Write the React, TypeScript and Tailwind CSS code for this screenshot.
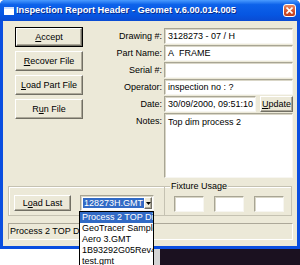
import React from "react";

const raised =
  "border border-white border-b-[#716f64] border-r-[#716f64] shadow-[inset_-1px_-1px_0_#aca899] bg-[#ece9d8]";
const sunken =
  "border border-[#a8a594] border-b-[#f7f6f1] border-r-[#f7f6f1] shadow-[inset_1px_1px_0_#d9d6c7] bg-white";

const Btn = ({ children, className = "" }: { children: React.ReactNode; className?: string }) => (
  <div className={`flex items-center justify-center ${raised} ${className}`}>{children}</div>
);

const U = ({ children }: { children: React.ReactNode }) => (
  <span className="underline underline-offset-[1px]">{children}</span>
);

const Row = ({ label, children, top = false }: { label: string; children: React.ReactNode; top?: boolean }) => (
  <div className={`flex gap-[2px] ${top ? "items-start" : "items-center"}`}>
    <div className={`w-[79px] text-right ${top ? "pt-[4px]" : ""}`}>{label}</div>
    {children}
  </div>
);

const items = ["Process 2 TOP Dim process 2", "GeoTracer Sample", "Aero 3.GMT", "1B93292G05Rev4", "test.gmt"];

export default function App() {
  return (
    <div className="w-[300px] h-[265px] overflow-hidden bg-white font-['Liberation_Sans',Arial,sans-serif] text-[9px] leading-none text-black">
      {/* ------------------------------------------------------window------------------------------------------------ */}
      <div className="flex flex-col bg-[#0a4ee0] rounded-t-[5px]">
        {/* title bar */}
        <div className="h-[21px] flex items-center pl-[4px] pr-[4px] rounded-t-[5px] bg-[linear-gradient(180deg,#4a9bff_0%,#0d62ea_22%,#0656e2_70%,#0a4bd2_100%)]">
          <div className="w-[10px] h-[8px] bg-white border-t-[2px] border-[#cfe0ff] mr-[2px]" />
          <span className="flex-1 font-bold text-white text-[9.3px] [text-shadow:1px_1px_0_#0a2a8a] whitespace-nowrap">
            Inspection Report Header - Geomet v.6.00.014.005
          </span>
          <div className="w-[13px] h-[13px] rounded-[3px] border border-white bg-[linear-gradient(180deg,#e98a66,#d2502a_60%,#c03e1c)] flex items-center justify-center">
            <svg width="7" height="7" viewBox="0 0 7 7">
              <path d="M0.5 0.5 L6.5 6.5 M6.5 0.5 L0.5 6.5" stroke="white" strokeWidth="1.6" />
            </svg>
          </div>
        </div>

        {/* body */}
        <div className="mx-[3px] h-[225px] bg-[#ece9d8] flex flex-col pl-[5px] pr-[4px] pt-[6px]">
          <div className="flex pl-[7px] h-[151px]">
            <div className="w-[68px] flex flex-col gap-[4px]">
              <div className="border border-black">
                <Btn className="h-[18px]">
                  <U>A</U>ccept
                </Btn>
              </div>
              <Btn className="h-[20px]">
                <U>R</U>ecover File
              </Btn>
              <Btn className="h-[20px]">
                <U>L</U>oad Part File
              </Btn>
              <Btn className="h-[20px]">
                R<U>u</U>n File
              </Btn>
            </div>
            <div className="flex-1 flex flex-col gap-[1px] pt-[1px]">
              <Row label="Drawing #:">
                <div className={`flex-1 h-[16px] ${sunken} flex items-center pl-[3px]`}>3128273 - 07 / H</div>
              </Row>
              <Row label="Part Name:">
                <div className={`flex-1 h-[16px] ${sunken} flex items-center pl-[3px]`}>A&nbsp; FRAME</div>
              </Row>
              <Row label="Serial #:">
                <div className={`flex-1 h-[16px] ${sunken}`} />
              </Row>
              <Row label="Operator:">
                <div className={`flex-1 h-[16px] ${sunken} flex items-center pl-[3px]`}>inspection no : ?</div>
              </Row>
              <Row label="Date:">
                <div className="flex-1 flex gap-[4px]">
                  <div className={`flex-1 h-[16px] ${sunken} flex items-center pl-[3px]`}>30/09/2000, 09:51:10</div>
                  <Btn className="w-[33px] h-[16px]">
                    <U>U</U>pdate
                  </Btn>
                </div>
              </Row>
              <Row label="Notes:" top>
                <div className={`flex-1 h-[65px] ${sunken} pl-[3px] pt-[4px]`}>Top dim process 2</div>
              </Row>
            </div>
          </div>

          {/* ---------------------------------------------------bottom panel--------------------------------------------- */}
          <div className="mt-[8px] mr-[1px] h-[30px] flex border border-[#c5c2b2] shadow-[inset_1px_1px_0_#fff]">
            <div className="flex pl-[5px] pt-[8px]">
              <Btn className="w-[57px] h-[16px]">
                L<U>o</U>ad Last
              </Btn>
              <div className={`relative ml-[9px] w-[74px] h-[16px] ${sunken} flex items-center pl-[2px] pr-[1px]`}>
                <span className="bg-[#316ac5] text-white px-[1px] leading-[10px] whitespace-nowrap">128273H.GMT</span>
                <div className="flex-1" />
                <Btn className="w-[11px] h-[12px]">
                  <svg width="5" height="3" viewBox="0 0 5 3">
                    <path d="M0 0 H5 L2.5 3 Z" fill="black" />
                  </svg>
                </Btn>
                {/* dropdown list */}
                <div className="absolute left-[-2px] top-[15px] z-10 w-[75px] border border-black bg-white">
                  {items.map((t, i) => (
                    <div
                      key={t}
                      className={`h-[11px] leading-[11px] pl-[2px] whitespace-nowrap overflow-hidden ${
                        i === 0 ? "bg-[#316ac5] text-white" : ""
                      }`}
                    >
                      {t}
                    </div>
                  ))}
                </div>
              </div>
            </div>
            <div className="relative ml-[10px] flex-1 border-l border-[#c5c2b2] flex gap-[10px] pl-[9px] pt-[9px]">
              <span className="absolute left-[5px] top-[-5px] bg-[#ece9d8] px-[1px]">Fixture Usage</span>
              <div className={`w-[30px] h-[16px] ${sunken}`} />
              <div className={`w-[30px] h-[16px] ${sunken}`} />
              <div className={`w-[30px] h-[16px] ${sunken}`} />
            </div>
          </div>

          {/* status bar */}
          <div className="mt-[7px] h-[17px] border border-[#aca899] border-b-white border-r-white flex items-center pl-[1px] whitespace-nowrap overflow-hidden">
            Process 2 TOP Dim process 2
          </div>
        </div>
        <div className="h-[3px]" />
      </div>
      {/* behind the window */}
      <div className="flex h-[16px]">
        <div className="w-[153px] bg-white" />
        <div className="w-[7px] bg-[#d4d4d4]" />
        <div className="flex-1 bg-[#1b1120]" />
      </div>
    </div>
  );
}
